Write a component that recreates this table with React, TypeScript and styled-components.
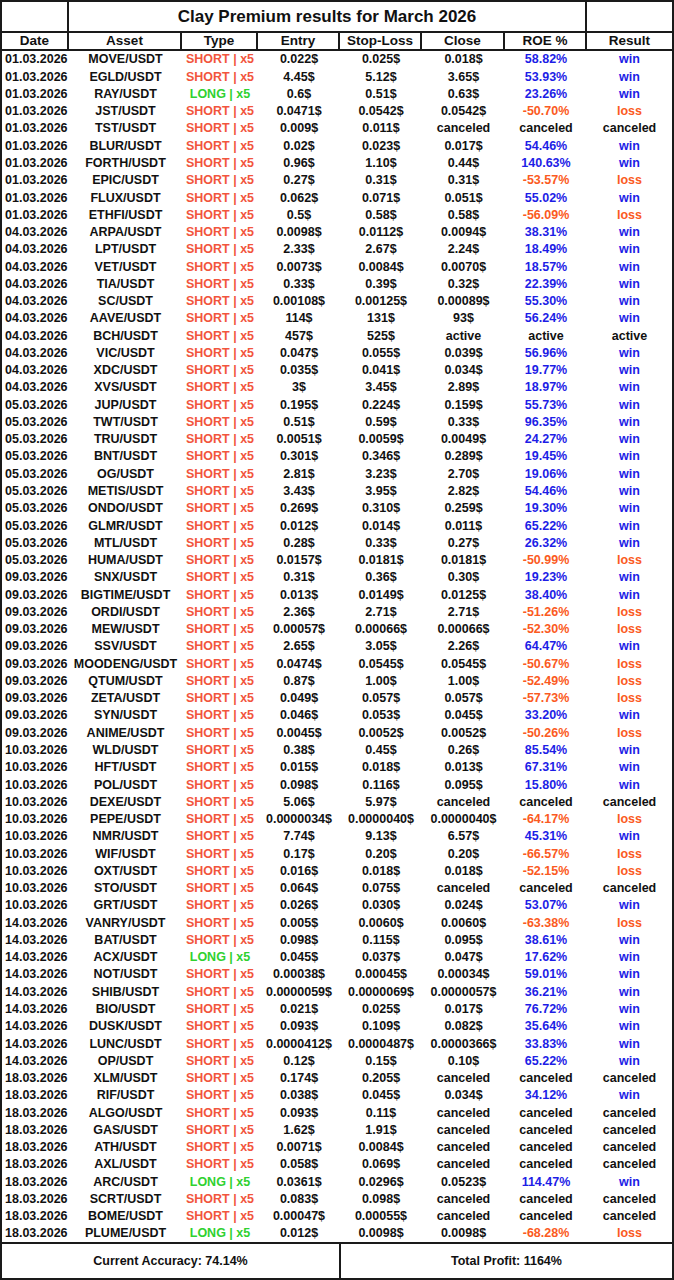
import React from "react";
import styled, { createGlobalStyle } from "styled-components";

const GlobalStyle = createGlobalStyle`
  html, body {
    margin: 0;
    padding: 0;
    background: #ffffff;
  }
  body {
    font-family: "Liberation Sans", Arial, sans-serif;
    color: #111111;
  }
`;

const COLS = "67px 113px 76px 82px 82px 83px 82px 1fr";

const Sheet = styled.div`
  width: 674px;
  height: 1280px;
  box-sizing: border-box;
  border: 2px solid #1a1a1a;
  display: flex;
  flex-direction: column;
  font-weight: 700;
  background: #ffffff;
`;

const TitleRow = styled.div`
  display: grid;
  grid-template-columns: 67px 518px 1fr;
  height: 31px;
  box-sizing: border-box;
  border-bottom: 2px solid #1a1a1a;
`;

const TitleCell = styled.div<{ $last?: boolean }>`
  display: flex;
  align-items: center;
  justify-content: center;
  font-size: 17px;
  border-right: ${(p) => (p.$last ? "none" : "2px solid #1a1a1a")};
`;

const HeadRow = styled.div`
  display: grid;
  grid-template-columns: ${COLS};
  height: 18px;
  box-sizing: border-box;
  border-bottom: 2px solid #1a1a1a;
`;

const HeadCell = styled.div<{ $last?: boolean }>`
  display: flex;
  align-items: center;
  justify-content: center;
  font-size: 13.5px;
  line-height: 1;
  border-right: ${(p) => (p.$last ? "none" : "2px solid #1a1a1a")};
`;

const Body = styled.div`
  display: flex;
  flex-direction: column;
`;

const Row = styled.div`
  display: grid;
  grid-template-columns: ${COLS};
  height: 17.28px;
  font-size: 12.5px;
  line-height: 1;
`;

const Cell = styled.div<{ $color?: string; $left?: boolean }>`
  display: flex;
  align-items: center;
  justify-content: ${(p) => (p.$left ? "flex-start" : "center")};
  padding-left: ${(p) => (p.$left ? "3px" : "0")};
  color: ${(p) => p.$color || "#111111"};
  white-space: nowrap;
`;

const Footer = styled.div`
  flex: 1;
  display: grid;
  grid-template-columns: 339px 1fr;
  border-top: 2px solid #1a1a1a;
`;

const FootCell = styled.div<{ $last?: boolean }>`
  display: flex;
  align-items: center;
  justify-content: center;
  font-size: 12.5px;
  border-right: ${(p) => (p.$last ? "none" : "2px solid #1a1a1a")};
`;

const RED = "#f2553d";
const ORANGE = "#fb5a22";
const GREEN = "#2fd12f";
const BLUE = "#1d1de6";

type Trade = [string, string, "S" | "L", string, string, string, string, string];

const trades: Trade[] = [
  ["01.03.2026", "MOVE/USDT", "S", "0.022$", "0.025$", "0.018$", "58.82%", "win"],
  ["01.03.2026", "EGLD/USDT", "S", "4.45$", "5.12$", "3.65$", "53.93%", "win"],
  ["01.03.2026", "RAY/USDT", "L", "0.6$", "0.51$", "0.63$", "23.26%", "win"],
  ["01.03.2026", "JST/USDT", "S", "0.0471$", "0.0542$", "0.0542$", "-50.70%", "loss"],
  ["01.03.2026", "TST/USDT", "S", "0.009$", "0.011$", "canceled", "canceled", "canceled"],
  ["01.03.2026", "BLUR/USDT", "S", "0.02$", "0.023$", "0.017$", "54.46%", "win"],
  ["01.03.2026", "FORTH/USDT", "S", "0.96$", "1.10$", "0.44$", "140.63%", "win"],
  ["01.03.2026", "EPIC/USDT", "S", "0.27$", "0.31$", "0.31$", "-53.57%", "loss"],
  ["01.03.2026", "FLUX/USDT", "S", "0.062$", "0.071$", "0.051$", "55.02%", "win"],
  ["01.03.2026", "ETHFI/USDT", "S", "0.5$", "0.58$", "0.58$", "-56.09%", "loss"],
  ["04.03.2026", "ARPA/USDT", "S", "0.0098$", "0.0112$", "0.0094$", "38.31%", "win"],
  ["04.03.2026", "LPT/USDT", "S", "2.33$", "2.67$", "2.24$", "18.49%", "win"],
  ["04.03.2026", "VET/USDT", "S", "0.0073$", "0.0084$", "0.0070$", "18.57%", "win"],
  ["04.03.2026", "TIA/USDT", "S", "0.33$", "0.39$", "0.32$", "22.39%", "win"],
  ["04.03.2026", "SC/USDT", "S", "0.00108$", "0.00125$", "0.00089$", "55.30%", "win"],
  ["04.03.2026", "AAVE/USDT", "S", "114$", "131$", "93$", "56.24%", "win"],
  ["04.03.2026", "BCH/USDT", "S", "457$", "525$", "active", "active", "active"],
  ["04.03.2026", "VIC/USDT", "S", "0.047$", "0.055$", "0.039$", "56.96%", "win"],
  ["04.03.2026", "XDC/USDT", "S", "0.035$", "0.041$", "0.034$", "19.77%", "win"],
  ["04.03.2026", "XVS/USDT", "S", "3$", "3.45$", "2.89$", "18.97%", "win"],
  ["05.03.2026", "JUP/USDT", "S", "0.195$", "0.224$", "0.159$", "55.73%", "win"],
  ["05.03.2026", "TWT/USDT", "S", "0.51$", "0.59$", "0.33$", "96.35%", "win"],
  ["05.03.2026", "TRU/USDT", "S", "0.0051$", "0.0059$", "0.0049$", "24.27%", "win"],
  ["05.03.2026", "BNT/USDT", "S", "0.301$", "0.346$", "0.289$", "19.45%", "win"],
  ["05.03.2026", "OG/USDT", "S", "2.81$", "3.23$", "2.70$", "19.06%", "win"],
  ["05.03.2026", "METIS/USDT", "S", "3.43$", "3.95$", "2.82$", "54.46%", "win"],
  ["05.03.2026", "ONDO/USDT", "S", "0.269$", "0.310$", "0.259$", "19.30%", "win"],
  ["05.03.2026", "GLMR/USDT", "S", "0.012$", "0.014$", "0.011$", "65.22%", "win"],
  ["05.03.2026", "MTL/USDT", "S", "0.28$", "0.33$", "0.27$", "26.32%", "win"],
  ["05.03.2026", "HUMA/USDT", "S", "0.0157$", "0.0181$", "0.0181$", "-50.99%", "loss"],
  ["09.03.2026", "SNX/USDT", "S", "0.31$", "0.36$", "0.30$", "19.23%", "win"],
  ["09.03.2026", "BIGTIME/USDT", "S", "0.013$", "0.0149$", "0.0125$", "38.40%", "win"],
  ["09.03.2026", "ORDI/USDT", "S", "2.36$", "2.71$", "2.71$", "-51.26%", "loss"],
  ["09.03.2026", "MEW/USDT", "S", "0.00057$", "0.00066$", "0.00066$", "-52.30%", "loss"],
  ["09.03.2026", "SSV/USDT", "S", "2.65$", "3.05$", "2.26$", "64.47%", "win"],
  ["09.03.2026", "MOODENG/USDT", "S", "0.0474$", "0.0545$", "0.0545$", "-50.67%", "loss"],
  ["09.03.2026", "QTUM/USDT", "S", "0.87$", "1.00$", "1.00$", "-52.49%", "loss"],
  ["09.03.2026", "ZETA/USDT", "S", "0.049$", "0.057$", "0.057$", "-57.73%", "loss"],
  ["09.03.2026", "SYN/USDT", "S", "0.046$", "0.053$", "0.045$", "33.20%", "win"],
  ["09.03.2026", "ANIME/USDT", "S", "0.0045$", "0.0052$", "0.0052$", "-50.26%", "loss"],
  ["10.03.2026", "WLD/USDT", "S", "0.38$", "0.45$", "0.26$", "85.54%", "win"],
  ["10.03.2026", "HFT/USDT", "S", "0.015$", "0.018$", "0.013$", "67.31%", "win"],
  ["10.03.2026", "POL/USDT", "S", "0.098$", "0.116$", "0.095$", "15.80%", "win"],
  ["10.03.2026", "DEXE/USDT", "S", "5.06$", "5.97$", "canceled", "canceled", "canceled"],
  ["10.03.2026", "PEPE/USDT", "S", "0.0000034$", "0.0000040$", "0.0000040$", "-64.17%", "loss"],
  ["10.03.2026", "NMR/USDT", "S", "7.74$", "9.13$", "6.57$", "45.31%", "win"],
  ["10.03.2026", "WIF/USDT", "S", "0.17$", "0.20$", "0.20$", "-66.57%", "loss"],
  ["10.03.2026", "OXT/USDT", "S", "0.016$", "0.018$", "0.018$", "-52.15%", "loss"],
  ["10.03.2026", "STO/USDT", "S", "0.064$", "0.075$", "canceled", "canceled", "canceled"],
  ["10.03.2026", "GRT/USDT", "S", "0.026$", "0.030$", "0.024$", "53.07%", "win"],
  ["14.03.2026", "VANRY/USDT", "S", "0.005$", "0.0060$", "0.0060$", "-63.38%", "loss"],
  ["14.03.2026", "BAT/USDT", "S", "0.098$", "0.115$", "0.095$", "38.61%", "win"],
  ["14.03.2026", "ACX/USDT", "L", "0.045$", "0.037$", "0.047$", "17.62%", "win"],
  ["14.03.2026", "NOT/USDT", "S", "0.00038$", "0.00045$", "0.00034$", "59.01%", "win"],
  ["14.03.2026", "SHIB/USDT", "S", "0.0000059$", "0.0000069$", "0.0000057$", "36.21%", "win"],
  ["14.03.2026", "BIO/USDT", "S", "0.021$", "0.025$", "0.017$", "76.72%", "win"],
  ["14.03.2026", "DUSK/USDT", "S", "0.093$", "0.109$", "0.082$", "35.64%", "win"],
  ["14.03.2026", "LUNC/USDT", "S", "0.0000412$", "0.0000487$", "0.0000366$", "33.83%", "win"],
  ["14.03.2026", "OP/USDT", "S", "0.12$", "0.15$", "0.10$", "65.22%", "win"],
  ["18.03.2026", "XLM/USDT", "S", "0.174$", "0.205$", "canceled", "canceled", "canceled"],
  ["18.03.2026", "RIF/USDT", "S", "0.038$", "0.045$", "0.034$", "34.12%", "win"],
  ["18.03.2026", "ALGO/USDT", "S", "0.093$", "0.11$", "canceled", "canceled", "canceled"],
  ["18.03.2026", "GAS/USDT", "S", "1.62$", "1.91$", "canceled", "canceled", "canceled"],
  ["18.03.2026", "ATH/USDT", "S", "0.0071$", "0.0084$", "canceled", "canceled", "canceled"],
  ["18.03.2026", "AXL/USDT", "S", "0.058$", "0.069$", "canceled", "canceled", "canceled"],
  ["18.03.2026", "ARC/USDT", "L", "0.0361$", "0.0296$", "0.0523$", "114.47%", "win"],
  ["18.03.2026", "SCRT/USDT", "S", "0.083$", "0.098$", "canceled", "canceled", "canceled"],
  ["18.03.2026", "BOME/USDT", "S", "0.00047$", "0.00055$", "canceled", "canceled", "canceled"],
  ["18.03.2026", "PLUME/USDT", "L", "0.012$", "0.0098$", "0.0098$", "-68.28%", "loss"],
];

const headers = ["Date", "Asset", "Type", "Entry", "Stop-Loss", "Close", "ROE %", "Result"];

const roeColor = (roe: string) => {
  if (roe.startsWith("-")) return ORANGE;
  if (roe.endsWith("%")) return BLUE;
  return undefined;
};

const resultColor = (res: string) => {
  if (res === "win") return BLUE;
  if (res === "loss") return ORANGE;
  return undefined;
};

const App = () => {
  return (
    <>
      <GlobalStyle />
      <Sheet>
        <TitleRow>
          <TitleCell />
          <TitleCell>Clay Premium results for March 2026</TitleCell>
          <TitleCell $last />
        </TitleRow>
        <HeadRow>
          {headers.map((h, i) => (
            <HeadCell key={h} $last={i === headers.length - 1}>
              {h}
            </HeadCell>
          ))}
        </HeadRow>
        <Body>
          {trades.map(([date, asset, type, entry, stop, close, roe, res], i) => (
            <Row key={i}>
              <Cell $left>{date}</Cell>
              <Cell>{asset}</Cell>
              <Cell $color={type === "L" ? GREEN : RED}>
                {type === "L" ? "LONG | x5" : "SHORT | x5"}
              </Cell>
              <Cell>{entry}</Cell>
              <Cell>{stop}</Cell>
              <Cell>{close}</Cell>
              <Cell $color={roeColor(roe)}>{roe}</Cell>
              <Cell $color={resultColor(res)}>{res}</Cell>
            </Row>
          ))}
        </Body>
        <Footer>
          <FootCell>Current Accuracy: 74.14%</FootCell>
          <FootCell $last>Total Profit: 1164%</FootCell>
        </Footer>
      </Sheet>
    </>
  );
};

export default App;
